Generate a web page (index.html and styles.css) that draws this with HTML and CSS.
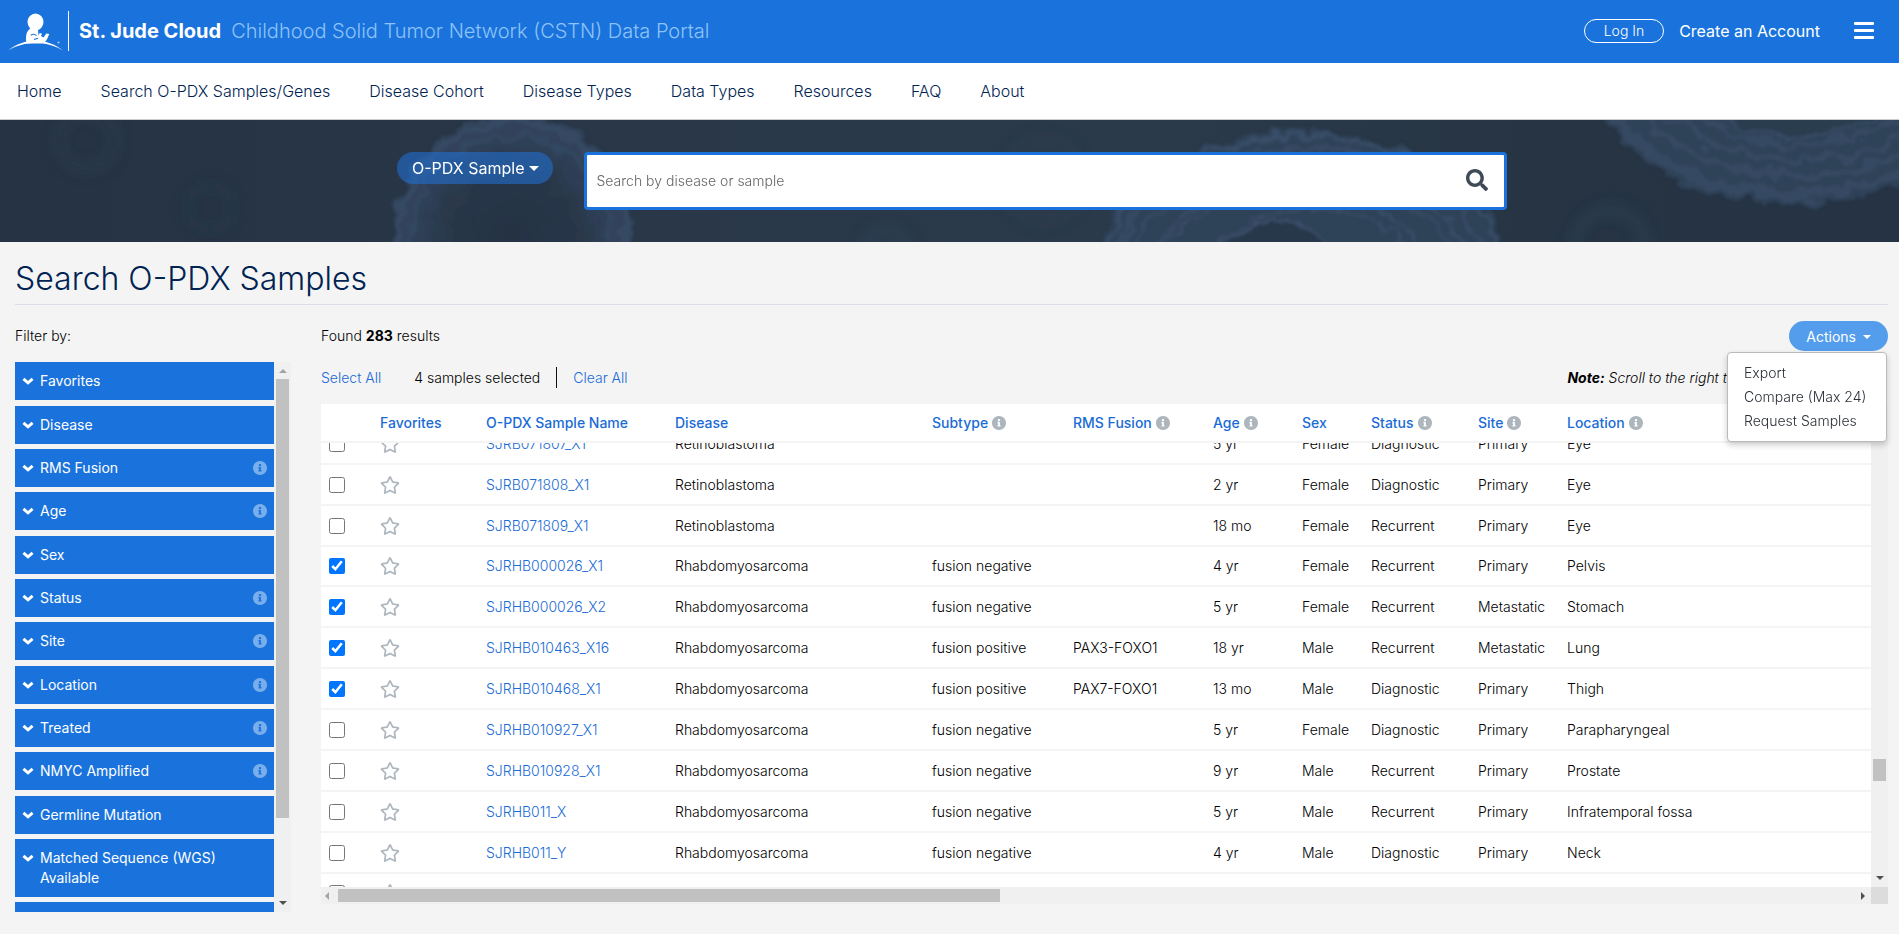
FILE: index.html
```html
<!DOCTYPE html>
<html lang="en">
<head>
<meta charset="utf-8">
<title>Search O-PDX Samples</title>
<link rel="stylesheet" href="styles.css">
</head>
<body>
<svg class="sprite" aria-hidden="true">
  <symbol id="star" viewBox="0 0 576 512"><path d="M528.1 171.5L382 150.2 316.7 17.8c-11.7-23.6-45.6-23.9-57.4 0L194 150.2 47.9 171.5c-26.2 3.8-36.7 36.1-17.7 54.6l105.7 103-25 145.5c-4.5 26.3 23.2 46 46.4 33.7L288 439.6l130.7 68.7c23.2 12.2 50.9-7.4 46.4-33.7l-25-145.5 105.7-103c19-18.5 8.5-50.8-17.7-54.6zM388.6 312.3l23.7 138.4L288 385.4l-124.3 65.3 23.7-138.4-100.6-98 139-20.2 62.2-126 62.2 126 139 20.2-100.6 98z"/></symbol>
  <symbol id="info" viewBox="8 8 496 496"><path d="M256 8C119.043 8 8 119.083 8 256c0 136.997 111.043 248 248 248s248-111.003 248-248C504 119.083 392.957 8 256 8zm0 110c23.196 0 42 18.804 42 42s-18.804 42-42 42-42-18.804-42-42 18.804-42 42-42zm56 254c0 6.627-5.373 12-12 12h-88c-6.627 0-12-5.373-12-12v-24c0-6.627 5.373-12 12-12h12v-64h-12c-6.627 0-12-5.373-12-12v-24c0-6.627 5.373-12 12-12h64c6.627 0 12 5.373 12 12v100h12c6.627 0 12 5.373 12 12v24z"/></symbol>
  <symbol id="chevron" viewBox="0 0 10 10"><path d="M1.2 3.2 5 6.6 8.8 3.2" fill="none" stroke="currentColor" stroke-width="2.4"/></symbol>
</svg>

<header class="topbar">
  <a class="brand" href="#">
    <svg class="logo" viewBox="0 0 56 40" aria-hidden="true">
      <ellipse cx="27.500" cy="11" rx="8" ry="8.600"/>
      <path d="M21 12c.2 2.600.6 3.800 1.300 5.500-4 3-5 7.500-3.800 15h13c3.500 0 6.300-1.400 7.500-4.200l2.300-5.300-3-.6-2.800 4-2.500-1.500 1-2.200-2.200-.7-1.800 2.500c.6-3.500.4-5.200-1.200-6.700l3-3z"/>
      <path d="M0 39.500C16 26.500 39 26.500 55 39.500 39 29.500 16 29.500 0 39.500z"/>
      <path d="M22.800 24.300q3.200-2.200 5.700.4M26 28.500l4-1.300" fill="none" stroke="#1a73dc" stroke-width="1.100"/>
      <circle cx="50.500" cy="31.500" r="1.100" opacity=".6"/>
    </svg>
    <span class="brand-name">St. Jude Cloud</span>
    <span class="brand-sub">Childhood Solid Tumor Network (CSTN) Data Portal</span>
  </a>
  <div class="account">
    <a class="login" href="#">Log In</a>
    <a class="create" href="#">Create an Account</a>
    <button class="menu-toggle" aria-label="Menu"><span></span><span></span><span></span></button>
  </div>
</header>

<nav class="nav">
  <a href="#">Home</a><a href="#">Search O-PDX Samples/Genes</a><a href="#">Disease Cohort</a><a href="#">Disease Types</a><a href="#">Data Types</a><a href="#">Resources</a><a href="#">FAQ</a><a href="#">About</a>
</nav>

<section class="hero">
  <svg class="hero-art" viewBox="0 0 1899 122" preserveAspectRatio="xMidYMid slice" aria-hidden="true">
    <defs>
      <filter id="rough" x="-10%" y="-10%" width="120%" height="120%"><feTurbulence type="fractalNoise" baseFrequency=".05" numOctaves="4" seed="7"/><feDisplacementMap in="SourceGraphic" scale="22" xChannelSelector="R" yChannelSelector="G"/><feGaussianBlur stdDeviation="1.500"/></filter>
      <filter id="soft" x="-20%" y="-20%" width="140%" height="140%"><feGaussianBlur stdDeviation="7"/></filter>
      <radialGradient id="cell"><stop offset="0" stop-color="#273243"/><stop offset=".5" stop-color="#283647"/><stop offset=".85" stop-color="#30425a"/><stop offset="1" stop-color="#31445b"/></radialGradient>
      <linearGradient id="base"><stop offset="0" stop-color="#263344"/><stop offset=".6" stop-color="#2b3a4b"/><stop offset=".82" stop-color="#263443"/><stop offset="1" stop-color="#263345"/></linearGradient>
    </defs>
    <rect width="1899" height="122" fill="url(#base)"/>
    <g filter="url(#soft)" fill="none" stroke="#30455c" stroke-width="9">
      <circle cx="87" cy="20" r="28" opacity=".35"/><circle cx="210" cy="88" r="22" opacity=".15"/>
      <circle cx="1610" cy="124" r="34" opacity=".5"/><circle cx="1043" cy="60" r="40" opacity=".25"/><circle cx="885" cy="130" r="20" opacity=".5"/>
    </g>
    <g filter="url(#rough)" fill="none" stroke="#3a506c">
      <ellipse cx="512" cy="115" rx="120" ry="120" fill="url(#cell)" stroke="none"/>
      <ellipse cx="512" cy="115" rx="114" ry="113" stroke-width="7" opacity=".5"/><ellipse cx="512" cy="115" rx="100" ry="99" stroke-width="5" opacity=".35"/>
      <ellipse cx="1302" cy="144" rx="202" ry="132" fill="#2f4258" stroke="none"/>
      <ellipse cx="1302" cy="144" rx="196" ry="127" stroke-width="4" opacity=".8"/><ellipse cx="1300" cy="144" rx="184" ry="116" stroke-width="5" opacity=".6"/>
      <ellipse cx="1298" cy="146" rx="168" ry="104" stroke-width="3" opacity=".8"/><ellipse cx="1305" cy="150" rx="150" ry="92" stroke-width="5" opacity=".5"/>
      <ellipse cx="1290" cy="152" rx="132" ry="80" stroke-width="3" opacity=".8"/><ellipse cx="1310" cy="156" rx="108" ry="66" stroke-width="3" opacity=".7"/>
      <ellipse cx="1276" cy="150" rx="62" ry="48" fill="#28374a" stroke-width="3"/>
      <ellipse cx="1795" cy="-58" rx="206" ry="143" fill="#2f4258" stroke="none"/>
      <ellipse cx="1795" cy="-58" rx="196" ry="133" opacity=".55" stroke-width="10"/><ellipse cx="1798" cy="-60" rx="176" ry="116" opacity=".55" stroke-width="7"/>
      <ellipse cx="1800" cy="-60" rx="158" ry="100" opacity=".5" stroke-width="6"/><ellipse cx="1802" cy="-60" rx="138" ry="84" opacity=".5" stroke-width="5"/>
      <ellipse cx="1800" cy="-56" rx="112" ry="72" fill="#293a4d" opacity=".7" stroke-width="3"/>
    </g>
  </svg>
  <div class="hero-inner">
    <button class="mode">O-PDX Sample<span class="caret"></span></button>
    <form class="search">
      <input type="text" placeholder="Search by disease or sample" aria-label="Search by disease or sample">
      <button type="button" aria-label="Search"><svg viewBox="0 0 512 512"><path d="M505 442.700L405.300 343c-4.500-4.500-10.600-7-17-7H372c27.600-35.300 44-79.700 44-128C416 93.100 322.900 0 208 0S0 93.100 0 208s93.100 208 208 208c48.300 0 92.700-16.400 128-44v16.300c0 6.400 2.500 12.500 7 17l99.700 99.700c9.400 9.400 24.600 9.400 33.900 0l28.300-28.300c9.400-9.400 9.400-24.600.1-34zM208 336c-70.700 0-128-57.200-128-128 0-70.700 57.200-128 128-128 70.700 0 128 57.200 128 128 0 70.700-57.200 128-128 128z"/></svg></button>
    </form>
  </div>
</section>

<main class="page">
  <h1>Search O-PDX Samples</h1>
  <div class="columns">
    <aside class="filters">
      <p class="label">Filter by:</p>
      <div class="filter-box">
        <div class="filter-list" id="filters"></div>
        <div class="vbar"><i class="up off"></i><div class="thumb filter-thumb"></div><i class="down"></i></div>
      </div>
    </aside>
    <section class="results">
      <div class="summary">
        <p class="label">Found <b>283</b> results</p>
        <div class="actions">
          <button class="actions-btn">Actions<span class="caret"></span></button>
          <div class="dropdown"><a href="#">Export</a><a href="#">Compare (Max 24)</a><a href="#">Request Samples</a></div>
        </div>
      </div>
      <div class="selection">
        <a href="#">Select All</a>
        <span class="count">4 samples selected</span>
        <a class="clear" href="#">Clear All</a>
        <em class="note"><b>Note:</b> Scroll to the right to view additional details.</em>
      </div>
      <div class="grid">
        <div class="viewport" id="viewport">
          <table>
            <colgroup><col class="c-check"><col class="c-fav"><col class="c-name"><col class="c-disease"><col class="c-subtype"><col class="c-rms"><col class="c-age"><col class="c-sex"><col class="c-status"><col class="c-site"><col></colgroup>
            <thead><tr>
              <th></th><th>Favorites</th><th>O-PDX Sample Name</th><th>Disease</th>
              <th>Subtype<svg class="info"><use href="#info"/></svg></th>
              <th>RMS Fusion<svg class="info"><use href="#info"/></svg></th>
              <th>Age<svg class="info"><use href="#info"/></svg></th>
              <th>Sex</th>
              <th>Status<svg class="info"><use href="#info"/></svg></th>
              <th>Site<svg class="info"><use href="#info"/></svg></th>
              <th>Location<svg class="info"><use href="#info"/></svg></th>
            </tr></thead>
            <tbody id="rows"></tbody>
          </table>
        </div>
        <div class="vbar"><i class="up"></i><div class="thumb row-thumb"></div><i class="down"></i></div>
        <div class="hbar"><i class="left off"></i><div class="htrack"><div class="thumb col-thumb"></div></div><i class="right"></i></div>
        <div class="corner"></div>
      </div>
    </section>
  </div>
</main>
<script src="app.js"></script>
</body>
</html>
```
FILE: styles.css
```css
* { box-sizing: border-box; }
body {
  margin: 0;
  min-height: 100vh;
  background: #f4f4f4;
  color: #000;
  font: 300 14px/20px Inter, "Liberation Sans", sans-serif;
}
a { color: #1a6bd6; text-decoration: none; }
button, input { font: inherit; border: 0; margin: 0; }
p { margin: 0; }
b { font-weight: 700; }
.sprite { display: none; }

.caret {
  display: inline-block;
  margin-left: 4px;
  vertical-align: 3px;
  border: 5px solid transparent;
  border-top-color: currentColor;
  border-bottom: 0;
}

/* top bar */
.topbar {
  display: flex;
  align-items: center;
  justify-content: space-between;
  height: 63px;
  padding: 0 25px 2px 8px;
  background: #1a73dc;
}
.brand { display: flex; align-items: center; color: #fff; font-size: 20px; line-height: 40px; }
.logo { width: 56px; height: 40px; margin-right: 4px; fill: #fff; }
.brand-name { padding: 0 10px; border-left: 1px solid #fff; font-weight: 700; }
.brand-sub { color: #8ec3f8; }
.account { display: flex; align-items: center; }
.account a { color: #fff; }
.login { padding: 1px 19px; border: 1px solid #fff; border-radius: 12px; }
.account .create { margin: 0 34px 0 15px; font-size: 16px; font-weight: 400; }
.menu-toggle { display: grid; gap: 4px; width: 20px; padding: 0; background: none; }
.menu-toggle span { height: 3px; border-radius: 1px; background: #fff; }

/* main navigation */
.nav {
  display: flex;
  align-items: center;
  gap: 39px;
  height: 57px;
  padding: 0 17px;
  border-bottom: 1px solid #ccc;
  background: #fff;
  font-size: 16px;
}
.nav a { color: #002352; }

/* search banner */
.hero { position: relative; height: 122px; padding: 32px 0 0 5px; overflow: hidden; background: #283647; }
.hero-art { position: absolute; inset: 0; width: 100%; height: 100%; }
.hero-inner { position: relative; display: flex; align-items: flex-start; gap: 31px; max-width: 1110px; margin: 0 auto; }
.mode { height: 32px; padding: 0 14px 0 15px; border-radius: 16px; background: rgba(32, 112, 210, .58); color: #fff; font-size: 16px; font-weight: 400; }
.search { display: flex; flex: 1; height: 58px; border: 3px solid #1a73dc; border-radius: 4px; background: #fff; }
.search input { flex: 1; padding: 0 10px; background: none; outline: 0; }
.search input::placeholder { color: #666; }
.search button { width: 54px; padding: 2px 0 0; background: none; }
.search svg { width: 22px; height: 22px; fill: #3f4a57; }

/* page */
.page { padding: 16px 11px 22px 15px; }
h1 { margin: 0 0 15px; padding-top: 1px; padding-bottom: 5px; border-bottom: 1px solid #dcdde8; color: #002352; font-size: 32px; font-weight: 300; line-height: 40px; }
.columns { display: grid; grid-template-columns: 276px minmax(0, 1fr); gap: 30px; }
.label { line-height: 32px; }

/* filters */
.filter-box { display: flex; height: calc(100vh - 384px); min-height: 200px; margin-top: 10px; }
.filter-list { flex: 1; overflow: hidden; }
.filter {
  display: flex;
  align-items: flex-start;
  width: 100%;
  margin-bottom: 5px;
  padding: 9px 7px;
  background: #1a73dc;
  color: #fff;
  font-weight: 400;
  text-align: left;
}
.filter:nth-child(3n+1) { margin-bottom: 6px; }
.filter .chev { flex: none; width: 12px; height: 12px; margin: 4px 6px 0 0; }
.filter span { flex: 1; padding-right: 20px; }
.filter .info { margin: 3px 0 0; fill: #78aeec; }

/* scroll bars */
.vbar { display: flex; flex-direction: column; align-items: center; justify-content: space-between; width: 17px; padding: 7px 0; background: #f0f0f0; }
.thumb { background: #c1c1c1; }
.vbar .thumb { width: 13px; }
.filter-thumb { flex: 1; margin: 6px 0 83px; }
.row-thumb { height: 22px; margin-top: 248px; }
.up, .down { border: 4px solid transparent; }
.up { border-bottom-color: #505050; border-top: 0; }
.up.off { border-bottom-color: #a3a3a3; }
.down { border-top-color: #505050; border-bottom: 0; }
.hbar { display: flex; align-items: center; height: 17px; padding: 0 6px 0 4px; background: #f0f0f0; }
.left, .right { border: 4px solid transparent; }
.left { border-right-color: #505050; border-left: 0; margin-right: 9px; }
.left.off { border-right-color: #a3a3a3; }
.right { border-left-color: #505050; border-right: 0; }
.htrack { display: grid; flex: 1; grid-template-columns: 10fr 13fr; }
.col-thumb { height: 13px; }
.corner { background: #dcdcdc; }

/* results */
.summary { display: flex; justify-content: space-between; align-items: flex-start; height: 32px; }
.actions { position: relative; margin-top: 1px; }
.actions-btn { height: 30px; padding: 1px 17px 0; border-radius: 15px; background: #549dec; color: #fff; font-weight: 400; }
.actions-btn .caret { margin-left: 7px; border-width: 4px; border-bottom: 0; }
.dropdown {
  position: absolute;
  z-index: 3;
  top: 31px;
  right: 1px;
  width: 160px;
  padding: 8px 0;
  border: 1px solid #bbb;
  border-radius: 4px;
  background: #fff;
  box-shadow: 0 3px 6px rgba(0, 0, 0, .2);
}
.dropdown a { display: block; padding: 0 16px; color: #2b3138; line-height: 24px; white-space: nowrap; }
.selection { display: flex; align-items: center; margin-top: 15px; line-height: 21px; }
.count { margin-left: 33px; padding-right: 16px; border-right: 1px solid #111; }
.clear { margin-left: 16px; }
.note { margin-left: auto; }

.grid { display: grid; grid-template-columns: minmax(0, 1fr) 17px; grid-template-rows: minmax(0, 1fr) 17px; height: calc(100vh - 434px); min-height: 200px; margin-top: 16px; }
.viewport { overflow: hidden; background: #fff; }
table { width: 100%; table-layout: fixed; border-spacing: 0; }
th, td { padding: 0 0 0 8px; border-bottom: 2px solid #f4f4f4; text-align: left; white-space: nowrap; }
th { position: sticky; top: 0; z-index: 1; height: 39px; background: #fff; color: #1a6bd6; font-weight: 500; }
td { height: 41px; }
tr:nth-child(8n+4) td { height: 40px; }
.info { width: 14px; height: 14px; margin-left: 4px; vertical-align: -2px; fill: #adb5bd; }
td input { display: block; width: 16px; height: 16px; }
.star { display: block; padding: 0; background: none; }
.star svg { display: block; width: 20px; height: 18px; fill: #adb5bd; }
.c-check { width: 51px; }
.c-fav { width: 106px; }
.c-name { width: 189px; }
.c-disease { width: 257px; }
.c-subtype { width: 141px; }
.c-rms { width: 140px; }
.c-age { width: 89px; }
.c-sex { width: 69px; }
.c-status { width: 107px; }
.c-site { width: 89px; }
```
FILE: app.js
```javascript
const filters = [
  ['Favorites', 0], ['Disease', 0], ['RMS Fusion', 1], ['Age', 1], ['Sex', 0], ['Status', 1],
  ['Site', 1], ['Location', 1], ['Treated', 1], ['NMYC Amplified', 1], ['Germline Mutation', 0],
  ['Matched Sequence (WGS) Available', 0], ['', 0]
];
document.getElementById('filters').innerHTML = filters.map(([name, info]) =>
  `<button class="filter"><svg class="chev"><use href="#chevron"/></svg><span>${name}</span>${info ? '<svg class="info"><use href="#info"/></svg>' : ''}</button>`
).join('');

const R = 'Retinoblastoma', M = 'Rhabdomyosarcoma', N = 'fusion negative', P = 'fusion positive';
const rows = [
  [0, 'SJRB071807_X1', R, '', '', '5 yr', 'Female', 'Diagnostic', 'Primary', 'Eye'],
  [0, 'SJRB071808_X1', R, '', '', '2 yr', 'Female', 'Diagnostic', 'Primary', 'Eye'],
  [0, 'SJRB071809_X1', R, '', '', '18 mo', 'Female', 'Recurrent', 'Primary', 'Eye'],
  [1, 'SJRHB000026_X1', M, N, '', '4 yr', 'Female', 'Recurrent', 'Primary', 'Pelvis'],
  [1, 'SJRHB000026_X2', M, N, '', '5 yr', 'Female', 'Recurrent', 'Metastatic', 'Stomach'],
  [1, 'SJRHB010463_X16', M, P, 'PAX3-FOXO1', '18 yr', 'Male', 'Recurrent', 'Metastatic', 'Lung'],
  [1, 'SJRHB010468_X1', M, P, 'PAX7-FOXO1', '13 mo', 'Male', 'Diagnostic', 'Primary', 'Thigh'],
  [0, 'SJRHB010927_X1', M, N, '', '5 yr', 'Female', 'Diagnostic', 'Primary', 'Parapharyngeal'],
  [0, 'SJRHB010928_X1', M, N, '', '9 yr', 'Male', 'Recurrent', 'Primary', 'Prostate'],
  [0, 'SJRHB011_X', M, N, '', '5 yr', 'Male', 'Recurrent', 'Primary', 'Infratemporal fossa'],
  [0, 'SJRHB011_Y', M, N, '', '4 yr', 'Male', 'Diagnostic', 'Primary', 'Neck'],
  [0, '', '', '', '', '', '', '', '', '']
];
document.getElementById('rows').innerHTML = rows.map(([on, name, ...rest]) =>
  `<tr><td><input type="checkbox" aria-label="Select ${name}"${on ? ' checked' : ''}></td>
   <td><button class="star" aria-label="Favorite ${name}"><svg><use href="#star"/></svg></button></td>
   <td><a href="#">${name}</a></td>${rest.map(v => `<td>${v}</td>`).join('')}</tr>`
).join('');
document.getElementById('viewport').scrollTop = 19;
```
